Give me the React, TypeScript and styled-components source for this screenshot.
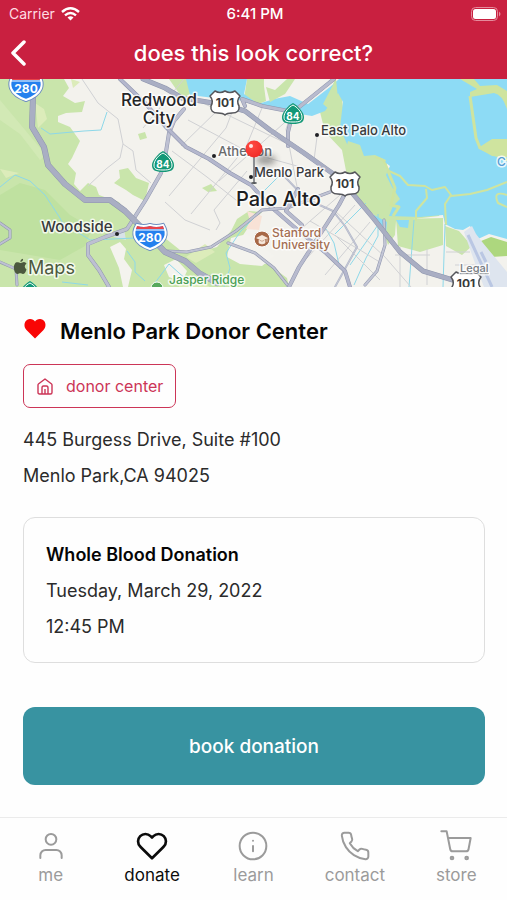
import React from "react";
import styled, { createGlobalStyle } from "styled-components";
import { FiHeart, FiInfo, FiPhone, FiShoppingCart, FiUser } from "react-icons/fi";
import type { IconType } from "react-icons";

const GlobalStyle = createGlobalStyle`
  *, *::before, *::after { box-sizing: border-box; }
  body { margin: 0; background: #fefefe; font-family: Inter, Roboto, sans-serif; color: #2b2b2b; }
  h1, h2, h3, p { margin: 0; }
  button { font-family: inherit; cursor: pointer; }
`;

const Screen = styled.div`
  display: flex;
  flex-direction: column;
  min-height: 100vh;
`;

const Header = styled.header`
  background: #c92040;
  color: #fff;
`;

const StatusBar = styled.div`
  display: grid;
  grid-template-columns: 1fr auto 1fr;
  align-items: center;
  height: 28px;
  padding: 0 6px 0 9px;
  font-size: 14px;
  line-height: 20px;
`;

const Carrier = styled.div`
  display: flex;
  align-items: center;
  gap: 6px;
  color: #ffdce3;
`;

const Clock = styled.time`
  font-size: 15px;
  font-weight: 500;
`;

const Battery = styled.svg`
  justify-self: end;
`;

const TitleBar = styled.div`
  display: grid;
  grid-template-columns: 48px 1fr 48px;
  align-items: center;
  height: 51px;
  padding-bottom: 2px;
`;

const BackButton = styled.button`
  display: flex;
  align-items: center;
  height: 48px;
  padding: 0 0 0 10px;
  border: 0;
  background: none;
  color: inherit;
`;

const Title = styled.h1`
  font-size: 22px;
  line-height: 32px;
  font-weight: 500;
  text-align: center;
`;

const MapView = styled.svg`
  display: block;
  width: 100%;
  height: 208px;
  font-family: Inter, Roboto, sans-serif;
`;

const Label = styled.text<{ $size: number; $weight?: number; $color?: string; $middle?: boolean }>`
  font-size: ${(p) => p.$size}px;
  font-weight: ${(p) => p.$weight ?? 500};
  fill: ${(p) => p.$color ?? "#38393b"};
  text-anchor: ${(p) => (p.$middle ? "middle" : "start")};
  stroke: #ffffffcc;
  stroke-width: 3px;
  stroke-linejoin: round;
  paint-order: stroke;
`;

const SignText = styled.text<{ $color: string; $size?: number }>`
  font-size: ${(p) => p.$size ?? 12}px;
  font-weight: 700;
  fill: ${(p) => p.$color};
  text-anchor: middle;
`;

const Content = styled.main`
  display: flex;
  flex-direction: column;
  align-items: flex-start;
  padding: 26px 22px 32px 23px;
`;

const CenterName = styled.div`
  display: flex;
  align-items: center;
  gap: 13px;
  margin-bottom: 15px;
`;

const HeartMark = styled.svg`
  margin-bottom: 6px;
`;

const Name = styled.h2`
  font-size: 22px;
  line-height: 36px;
  font-weight: 600;
  color: #050505;
`;

const Tag = styled.div`
  display: flex;
  align-items: center;
  gap: 13px;
  height: 44px;
  padding: 0 12px 0 13px;
  margin-bottom: 14px;
  border: 1px solid #cc3557;
  border-radius: 7px;
  color: #cc3557;
  font-size: 16px;
`;

const Line = styled.p`
  font-size: 18px;
  line-height: 36px;
`;

const Appointment = styled.section`
  width: 100%;
  margin: 23px 0 44px;
  padding: 19px 22px 17px;
  border: 1px solid #dedede;
  border-radius: 12px;
`;

const DonationType = styled.h3`
  font-size: 18px;
  line-height: 36px;
  font-weight: 600;
  color: #050505;
`;

const BookButton = styled.button`
  width: 100%;
  height: 78px;
  border: 0;
  border-radius: 12px;
  background: #3893a1;
  color: #fff;
  font-size: 19px;
  font-weight: 500;
`;

const TabBar = styled.nav`
  display: grid;
  grid-template-columns: repeat(5, 1fr);
  height: 84px;
  margin-top: auto;
  border-top: 1px solid #ebebeb;
`;

const Tab = styled.a<{ $active: boolean }>`
  display: flex;
  flex-direction: column;
  align-items: center;
  padding-top: 12px;
  color: ${(p) => (p.$active ? "#0b0b0b" : "#9b9b9b")};
  font-size: 17px;
  line-height: 26px;
  text-decoration: none;
`;

const tabs: { label: string; icon: IconType }[] = [
  { label: "me", icon: FiUser },
  { label: "donate", icon: FiHeart },
  { label: "learn", icon: FiInfo },
  { label: "contact", icon: FiPhone },
  { label: "store", icon: FiShoppingCart },
];

function Road({ d, width = 4, color = "#a9aec3", edge = "#8e95ad" }: { d: string; width?: number; color?: string; edge?: string }) {
  return (
    <g fill="none" strokeLinejoin="round" strokeLinecap="round">
      <path d={d} stroke={edge} strokeWidth={width} />
      <path d={d} stroke={color} strokeWidth={width - 1} />
    </g>
  );
}

function Interstate({ x, y }: { x: number; y: number }) {
  return (
    <g transform={`translate(${x} ${y})`}>
      <path d="M-13-11Q-6-9 0-11Q6-9 13-11C18-3 17 7 0 13C-17 7-18-3-13-11Z" fill="#2c7de8" stroke="#6d8fc0" strokeWidth="4" />
      <path d="M-13-11Q-6-9 0-11Q6-9 13-11C18-3 17 7 0 13C-17 7-18-3-13-11Z" fill="#2480ee" stroke="#fff" strokeWidth="2" />
      <path d="M-13-10Q-6-8 0-10Q6-8 13-10L14-7H-14Z" fill="#e8444a" />
      <path d="M-15-6H15" stroke="#fff" />
      <SignText y="6" $color="#fff">280</SignText>
    </g>
  );
}

function UsRoute({ x, y }: { x: number; y: number }) {
  return (
    <g transform={`translate(${x} ${y})`}>
      <path d="M-10-12Q-5-9 0-12Q5-9 10-12L15-7Q11-2 14 3Q15 10 7 10Q2 10 0 12Q-2 10-7 10Q-15 10-14 3Q-11-2-15-7Z" fill="#fff" stroke="#55565b" strokeWidth="1.5" strokeLinejoin="round" />
      <SignText y="4" $color="#38393b">101</SignText>
    </g>
  );
}

function StateRoute({ x, y }: { x: number; y: number }) {
  return (
    <g transform={`translate(${x} ${y})`}>
      <path d="M0-11C4-9 11-2 11 3C11 8 8 10 0 10C-8 10-11 8-11 3C-11-2-4-9 0-11Z" fill="#139877" />
      <path d="M0-9C4-7 9-2 9 3C9 7 7 8 0 8C-7 8-9 7-9 3C-9-2-4-7 0-9Z" fill="none" stroke="#fff" />
      <SignText y="6" $color="#fff" $size={10}>84</SignText>
    </g>
  );
}

function LocationMap() {
  return (
    <MapView viewBox="0 79 507 208" preserveAspectRatio="xMidYMid slice" role="img" aria-label="Map of Menlo Park">
      <defs>
        <filter id="soft" x="-50%" y="-50%" width="200%" height="200%">
          <feGaussianBlur stdDeviation="3" />
        </filter>
        <radialGradient id="pin" cx="0.35" cy="0.3" r="0.8">
          <stop offset="0" stopColor="#ff4b42" />
          <stop offset="1" stopColor="#f02a26" />
        </radialGradient>
      </defs>
      <rect y="79" width="507" height="208" fill="#f3f2ed" />

      <g fill="#c9e5ab">
        <path d="M0 79H64L69 88L63 96L75 103L85 101L82 112L66 113L58 116V122L70 127L80 141L72 158L68 164L76 173L74 184L80 191L88 183L96 187L99 195L110 199L119 202L132 221L149 230L165 238L180 250L196 253L217 247L231 231L237 219L249 211L262 212L251 223L240 240L237 260L252 263L268 264L287 278L289 287H0Z" />
        <path d="M114 183L120 178L119 170L128 168L136 178L149 183L145 201L133 195L126 190Z" />
        <path d="M138 134L145 132L147 138L140 140Z" />
        <path d="M202 188L211 184L217 191L208 192Z" />
        <path d="M247 79H263L266 101L256 105L244 99ZM169 79H187L192 92L183 99Z" />
        <path d="M335 79L342 99L344 116L339 130L347 139L358 155L372 159L383 165L386 158L388 170L400 177L407 185L426 188L439 194L444 203L439 216L396 221L395 235L388 245L379 220L366 207L357 199L347 176L342 150L325 132L320 112L328 99Z" />
        <path d="M396 219L443 218V245L420 252L398 246ZM445 226L459 231L465 238L472 246L462 255L446 246Z" />
        <path d="M476 243L491 237L507 242V256L491 257Z" fill="#add77e" />
      </g>
      <path d="M0 195L20 183L45 190L70 215L92 228L85 246L60 260L0 250Z" fill="#bfe1a0" />
      <g fill="#dcecba">
        <path d="M35 103L44 109L47 119L38 128ZM0 169L19 173L6 178ZM71 79L80 82L73 88Z" />
        <path d="M186 257L205 244L215 252L196 263ZM178 280L190 275L210 287H179Z" />
      </g>
      <path d="M0 100L46 155L40 160L20 134L0 120Z" fill="#d2e9b5" />
      <g fill="#f4f3ee">
        <path d="M110 247L120 242L126 249L124 259L132 270L128 287H123L119 268ZM164 265L176 259L187 271L182 282L169 277ZM227 257L231 238L247 234L274 256L262 266L240 264Z" />
      </g>
      <path d="M247 211L262 216L259 230L246 229L250 221Z" fill="#f8e2d6" />
      <path d="M116 231L124 229L126 240L114 237ZM348 160L356 153L370 158L371 181L362 174Z" fill="#d8e2e8" />

      <g fill="#8ddbf5">
        <path d="M186 79H247L244 94L258 104L274 99L290 96L308 104L330 87L339 79H507V239L489 234L478 239L470 226L463 230L455 229L445 224L443 215L420 217L389 216L393 206L400 199L392 187L386 175L390 166L382 160L371 161L359 153L347 144L340 128L343 102L338 93L325 111L312 116L300 114L288 110L264 106L247 101L214 98L190 95Z" />
        <path d="M396 220L409 220L408 228L400 227ZM374 215L387 222L386 233L374 220Z" />
      </g>
      <path d="M464 232L472 226L476 234L483 243L507 272V287H484L476 266Z" fill="#dee5ef" />
      <g fill="#c9e5ab">
        <path d="M266 87L275 90L287 79H295L285 94L270 102ZM247 79H264L263 100L249 97ZM336 79L338 99L330 110L323 104Z" />
        <path d="M348 141L360 145L364 156L375 155L386 160L382 171L374 174L382 187L374 200L363 190L353 172L345 154Z" />
      </g>
      <g fill="none" stroke="#cfe49f" strokeWidth="3" strokeLinejoin="round">
        <path d="M470 96L476 138L480 148L507 160" />
        <path d="M375 157L383 160L389 171L400 176L408 185L425 186L432 190L445 187L451 195L445 204L446 225M426 189L427 198L416 211L416 221M451 196L470 194L487 190L507 182M507 195Q492 190 498 203L507 207" strokeWidth="2" />
        <path d="M388 171L395 188L391 205L399 207L393 216" />
      </g>
      <path d="M460 79H474L480 86L497 85L507 91V109Q502 94 494 93L470 97V92L477 89ZM478 148L492 139H507V157L492 156Z" fill="#cfe49f" />

      <g fill="none" stroke="#8dd8e9" strokeWidth="1">
        <path d="M41 128L50 134L84 131L101 130L107 112M0 187L15 175L30 181L45 195L60 218L62 222L90 240L135 238" />
        <path d="M264 191L278 177L294 169M224 287L230 268L226 253L240 232L255 217M414 220L409 287M445 224L443 287M335 234L366 203M350 265L380 222M354 285L366 258L378 236V214M326 229L334 243L340 269M88 285L62 282" />
        <path d="M127 251L135 262L135 272L145 281M152 287L169 264L188 281" />
      </g>
      <g fill="none" stroke="#d0d1d4" strokeWidth="1">
        <path d="M82 79L98 103L118 119L123 144L120 158L106 169L88 186M123 144L133 151L136 170L151 183M143 128L184 79M169 196L226 128L237 99M191 214L246 147L262 108M216 230L220 223L214 210L247 171M165 202L185 220L210 230M172 151L207 177L241 204M188 120L250 153L315 171M203 103L300 150M181 146L222 106M219 181L292 116M298 192L286 129L290 118M310 221L360 250L378 261M286 242L340 195M307 258L355 205M325 275L370 222M335 211L385 257L411 287M335 235L380 280M400 247V287M427 249V285M395 255H430M446 252H470M455 265H476M317 137L314 160" />
      </g>
      <Road d="M335 287L357 247L345 226L333 211L306 199L285 177" width={2} color="#c5c8d4" edge="#b3b8ca" />
      <Road d="M384 220L385 245L377 271L365 285" width={3} color="#c2c5d5" />
      <Road d="M184 109L174 121L169 133L165 158L161 173L145 201L127 229L105 237L88 244L88 255L99 270L109 287" width={4} color="#bdc0d2" />
      <Road d="M0 223L10 230L10 238L0 244M0 262L16 269L17 285" width={3} color="#bdc0d2" />
      <Road d="M120 79L145 103L165 126L186 147L209 159L230 173L251 185L270 206L300 232L326 253L345 271L350 287" width={4} color="#b4b7cd" />
      <Road d="M165 251L187 252L211 247L236 231L262 210L287 208L330 192M228 243L255 253L274 268L289 287" width={3} color="#c0c3d3" />
      <Road d="M289 287L299 267L319 236L339 205L347 190M298 189L286 211L302 225M245 106L242 99L262 106L293 112L334 79M293 112L288 132L288 146" width={4} color="#b8bbce" />
      <Road d="M143 79L165 88L182 98L201 101L225 105L245 111L270 130L304 153L332 173L348 188L374 219L400 252L423 271L466 284" width={5} />
      <Road d="M28 79L33 97L32 127L44 147L48 165L65 184L85 200L110 200L125 211L145 231L165 252L185 261L199 273L217 283" width={6} />
      <path d="M468 235L492 287M481 252L486 262" stroke="#bac7e3" strokeWidth="3" />

      <Interstate x={26} y={87} />
      <Interstate x={150} y={236} />
      <StateRoute x={163} y={162} />
      <StateRoute x={293} y={114} />
      <StateRoute x={30} y={292} />
      <UsRoute x={225} y={103} />
      <UsRoute x={345} y={184} />
      <UsRoute x={466} y={284} />

      <g fill="#202124">
        <circle cx="117" cy="234" r="2" /><circle cx="214" cy="156" r="2" />
        <circle cx="251" cy="177" r="2" /><circle cx="317" cy="135" r="2" />
      </g>
      <Label x="159" y="106" $size={17} $color="#242527" $middle>Redwood</Label>
      <Label x="159" y="124" $size={17} $color="#242527" $middle>City</Label>
      <Label x="321" y="135" $size={13}>East Palo Alto</Label>
      <Label x="218" y="156" $size={13} $color="#696a6c">Atherton</Label>
      <Label x="254" y="177" $size={13}>Menlo Park</Label>
      <Label x="236" y="206" $size={20} $color="#1c1d1f">Palo Alto</Label>
      <Label x="41" y="232" $size={15}>Woodside</Label>
      <Label x="272" y="237" $size={12} $color="#a46e52">Stanford</Label>
      <Label x="272" y="249" $size={12} $color="#a46e52">University</Label>
      <Label x="169" y="284" $size={12} $color="#4a9f55">Jasper Ridge</Label>
      <Label x="497" y="166" $size={12} $color="#559dd5">C</Label>
      <a href="#legal">
        <Label x="460" y="272" $size={11} $color="#777c83" textDecoration="underline">Legal</Label>
      </a>
      <circle cx="157" cy="288" r="6" fill="#56a95c" stroke="#fff" />

      <g transform="translate(262 239)">
        <circle r="8" fill="#a76847" stroke="#fff" />
        <path d="M-6-1L0-4L6-1L0 2Z" fill="#f6e7da" />
        <path d="M-3 1V4Q0 6 3 4V1L0 3ZM5-1V3" fill="#f6e7da" stroke="#f6e7da" strokeWidth="0.7" />
      </g>
      <g transform="translate(14 259)" fill="#4c593e">
        <path d="M6.500 4C8 4 8.500 3 10 3Q11.500 3 12.500 4.500Q9 7.500 12.500 10.500Q11 15 9 15C7.500 15 7.500 14.300 6.300 14.300C5 14.300 5 15 3.500 15C1 15-1.500 9 .7 5C2.500 2 5 4 6.500 4ZM6.500 3Q6 .5 9 -.3Q9.500 2 6.500 3Z" />
      </g>
      <Label x="28" y="274" $size={18} $color="#4c593e" $weight={400}>Maps</Label>

      <ellipse cx="266" cy="160" rx="10" ry="5" fill="#333" opacity="0.45" filter="url(#soft)" />
      <path d="M254 157V183" stroke="#8b8e92" strokeWidth="2" />
      <ellipse cx="254" cy="183" rx="3" ry="1" fill="#55585b" />
      <circle cx="254" cy="149" r="8.500" fill="url(#pin)" />
      <circle cx="251" cy="146" r="2" fill="#ffe3df" />
    </MapView>
  );
}

export default function App() {
  return (
    <Screen>
      <GlobalStyle />
      <Header>
        <StatusBar>
          <Carrier>
            Carrier
            <svg width="19" height="14" viewBox="0 0 19 14" fill="none" stroke="#fff" strokeWidth="2.400" aria-hidden="true">
              <path d="M1 5Q9.500-2.500 18 5M4 8.300Q9.500 3.500 15 8.300" />
              <path d="M6.500 10.600Q9.500 8 12.500 10.600L9.500 13.600Z" fill="#fff" stroke="none" />
            </svg>
          </Carrier>
          <Clock>6:41 PM</Clock>
          <Battery width="30" height="14" viewBox="0 0 30 14" aria-label="Battery full" role="img">
            <rect x="0.500" y="0.500" width="26" height="13" rx="4" fill="none" stroke="#e58b9c" />
            <rect x="2" y="2" width="23" height="10" rx="2.500" fill="#fff" />
            <path d="M28 4.500Q31 7 28 9.500Z" fill="#e58b9c" />
          </Battery>
        </StatusBar>
        <TitleBar>
          <BackButton type="button" aria-label="Back">
            <svg width="18" height="26" viewBox="0 0 18 26" fill="none" stroke="#fff" strokeWidth="3.500" strokeLinecap="round" strokeLinejoin="round">
              <path d="M14 2L3 13L14 24" />
            </svg>
          </BackButton>
          <Title>does this look correct?</Title>
        </TitleBar>
      </Header>

      <LocationMap />

      <Content>
        <CenterName>
          <HeartMark width="24" height="21" viewBox="0 0 24 21" aria-hidden="true">
            <path d="M12 20.500L3.500 12C0 8.500 1 1.500 6.700 1C9 .8 11 2 12 3.600C13 2 15 .8 17.300 1C23 1.500 24 8.500 20.500 12Z" fill="#f90505" />
          </HeartMark>
          <Name>Menlo Park Donor Center</Name>
        </CenterName>
        <Tag>
          <svg width="16" height="17" viewBox="0 0 16 17" fill="none" stroke="currentColor" strokeWidth="1.400" strokeLinejoin="round" aria-hidden="true">
            <path d="M1 7Q1 6.200 1.700 5.700L8 1L14.300 5.700Q15 6.200 15 7V14.500Q15 16 13.500 16H2.500Q1 16 1 14.500ZM5 16V10Q5 8 6.500 8H9.500Q11 8 11 10V16M8 11V16" />
          </svg>
          donor center
        </Tag>
        <Line>445 Burgess Drive, Suite #100</Line>
        <Line>Menlo Park,CA 94025</Line>
        <Appointment>
          <DonationType>Whole Blood Donation</DonationType>
          <Line>Tuesday, March 29, 2022</Line>
          <Line>12:45 PM</Line>
        </Appointment>
        <BookButton type="button">book donation</BookButton>
      </Content>

      <TabBar aria-label="Main">
        {tabs.map(({ label, icon: Icon }) => (
          <Tab key={label} href={`#${label}`} $active={label === "donate"} aria-current={label === "donate" ? "page" : undefined}>
            <Icon size={32} strokeWidth={label === "donate" ? 2 : 1.5} aria-hidden="true" />
            {label}
          </Tab>
        ))}
      </TabBar>
    </Screen>
  );
}
